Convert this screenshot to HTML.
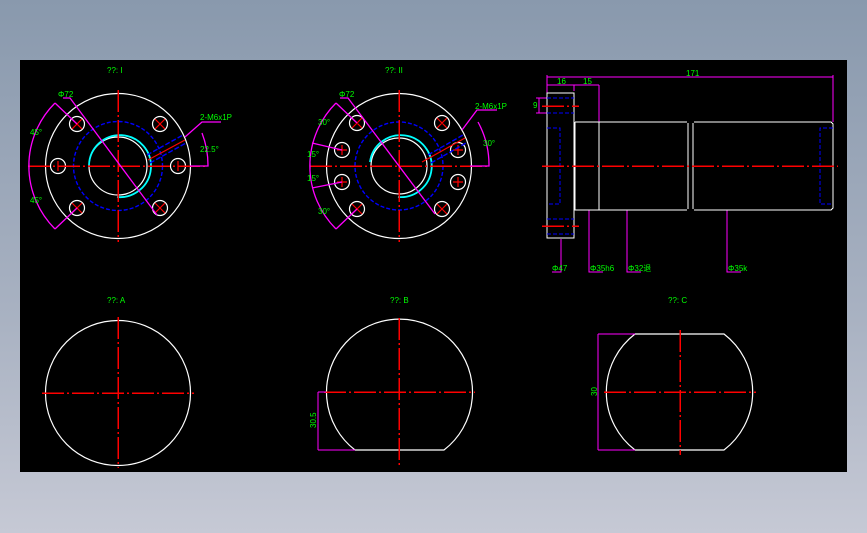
<!DOCTYPE html>
<html><head><meta charset="utf-8"><style>
html,body{margin:0;padding:0;width:867px;height:533px;overflow:hidden;background:linear-gradient(#8999ad,#a9b2c2 60%,#c6c9d5);}
svg{position:absolute;left:0;top:0}
text{font-family:"Liberation Sans",sans-serif;fill:#00ff00;font-size:8px}
.w{stroke:#fff;fill:none;stroke-width:1.2}
.r{stroke:#ff0000;fill:none;stroke-width:1.5;stroke-dasharray:22 3 2 3;shape-rendering:crispEdges}
.b{stroke:#0000ff;fill:none;stroke-width:1.4;stroke-dasharray:4 2}
.m{stroke:#ff00ff;fill:none;stroke-width:1.3}
.c{stroke:#00ffff;fill:none;stroke-width:1.8}
.hr{stroke:#ff0000;stroke-width:1.2}
.ce{shape-rendering:crispEdges}
</style></head><body>
<svg width="867" height="533" viewBox="0 0 867 533">
<rect x="20" y="60" width="827" height="412" fill="#000"/>
<!-- View I -->
<text x="107" y="73">??: I</text>
<circle class="w" cx="118" cy="166" r="72.5"/>
<circle class="w" cx="118" cy="166" r="29"/>
<circle class="b" cx="118" cy="166" r="44.5"/>
<path class="c" d="M89,165 A31,31 0 1 1 117,197"/>
<g class="w">
<circle cx="77" cy="124" r="7.5"/><circle cx="160" cy="124" r="7.5"/>
<circle cx="58" cy="166" r="7.5"/><circle cx="178" cy="166" r="7.5"/>
<circle cx="77" cy="208" r="7.5"/><circle cx="160" cy="208" r="7.5"/>
</g>
<g class="hr">
<path d="M72,119L82,129M82,119L72,129M155,119L165,129M165,119L155,129M72,203L82,213M82,203L72,213M155,203L165,213M165,203L155,213M58,161V171M178,161V171"/>
</g>
<path class="r" d="M28,166H208M118,90V242"/>
<path class="b" style="stroke-dasharray:5 2" d="M147,155L183,135M150,163L186,143"/>
<path class="hr" d="M148,160L185,140"/>
<path class="m" d="M63,98H70L157,215M55,103A89,89 0 0 0 55,229M55,103L77,124M55,229L77,208M29,163V169M202,133A90,90 0 0 1 208,166H190M185,137L202,122H221"/>
<text x="58" y="97" font-size="6">Φ72</text>
<text x="30" y="135" font-size="6">45°</text>
<text x="30" y="203" font-size="6">45°</text>
<text x="200" y="152" font-size="7">22.5°</text>
<text x="200" y="120" font-size="5">2-M6x1P</text>
<!-- View II -->
<text x="385" y="73">??: II</text>
<circle class="w" cx="399" cy="166" r="72.5"/>
<circle class="w" cx="399" cy="166" r="28"/>
<circle class="b" cx="399" cy="166" r="44"/>
<path class="c" d="M370,162 A31,31 0 1 1 398,197"/>
<g class="w">
<circle cx="357" cy="123" r="7.5"/><circle cx="442" cy="123" r="7.5"/>
<circle cx="342" cy="150" r="7.5"/><circle cx="458" cy="150" r="7.5"/>
<circle cx="342" cy="182" r="7.5"/><circle cx="458" cy="182" r="7.5"/>
<circle cx="357" cy="209" r="7.5"/><circle cx="442" cy="209" r="7.5"/>
</g>
<path class="hr" d="M352,118L362,128M362,118L352,128M437,118L447,128M447,118L437,128M352,204L362,214M362,204L352,214M437,204L447,214M447,204L437,214M337,150H347M342,145V155M453,150H463M458,145V155M337,182H347M342,177V187M453,182H463M458,177V187"/>
<path class="r" d="M310,166H490M399,90V242"/>
<path class="b" style="stroke-dasharray:5 2" d="M428,155L463,135M431,163L466,143"/>
<path class="hr" d="M422,162L465,138"/>
<path class="m" d="M340,98H348L435,214M336,103A89,89 0 0 0 336,229M336,103L357,123M336,229L357,209M312,143L342,150M312,188L342,182M310,163V169M478,122A90,90 0 0 1 489,166H470M462,130L477,110H497"/>
<text x="339" y="97" font-size="6">Φ72</text>
<text x="318" y="125" font-size="6">30°</text>
<text x="307" y="157" font-size="6">15°</text>
<text x="307" y="181" font-size="6">15°</text>
<text x="318" y="214" font-size="6">30°</text>
<text x="483" y="146" font-size="6">30°</text>
<text x="475" y="109" font-size="5">2-M6x1P</text>
<!-- Side view -->
<path class="m ce" d="M547,77H833M547,75V95M833,75V122M547,85H599M574,85V91M599,85V122M539,98V113M536,98H547M536,113H547M561,239V272H552M589,210V272H603M627,210V272H641M727,210V272H741"/>
<text x="686" y="76" font-size="6">171</text>
<text x="557" y="84" font-size="6">16</text>
<text x="583" y="84" font-size="6">15</text>
<text x="533" y="108" font-size="5">9</text>
<text x="552" y="271" font-size="5">Φ47</text>
<text x="590" y="271" font-size="5">Φ35h6</text>
<text x="628" y="271" font-size="5">Φ32退</text>
<text x="728" y="271" font-size="5">Φ35k</text>
<path class="w ce" d="M547,93H574V238H547Z M575,122H687M694,122H831L833,124V208L831,210H694M687,210H575V122M599,122V210M688,123V209M693,123V209"/>
<path class="b ce" d="M547,98H574M547,113H574M547,219H574M547,234H574M547,128H560V204H547M833,128H820V204H833"/>
<path class="r" d="M542,166H838M542,106H579M542,226H579"/>
<!-- View A -->
<text x="107" y="303">??: A</text>
<circle class="w" cx="118" cy="393" r="72.5"/>
<path class="r" d="M42,393H194M118,317V468"/>
<!-- View B -->
<text x="390" y="303">??: B</text>
<path class="w" d="M355,450 A73,73 0 1 1 444,450 Z"/>
<path class="r" d="M324,392H475M399,318V468"/>
<path class="m ce" d="M318,392V450M318,392H326M318,450H355"/>
<text x="316" y="428" font-size="6" transform="rotate(-90 316 428)">30.5</text>
<!-- View C -->
<text x="668" y="303">??: C</text>
<path class="w" d="M635,334H724A73,73 0 0 1 724,450H635A73,73 0 0 1 635,334Z"/>
<path class="r" d="M604,392H756M680,330V455"/>
<path class="m ce" d="M598,334V450M598,334H635M598,450H635"/>
<text x="597" y="396" font-size="6" transform="rotate(-90 597 396)">30</text>
</svg>
</body></html>
